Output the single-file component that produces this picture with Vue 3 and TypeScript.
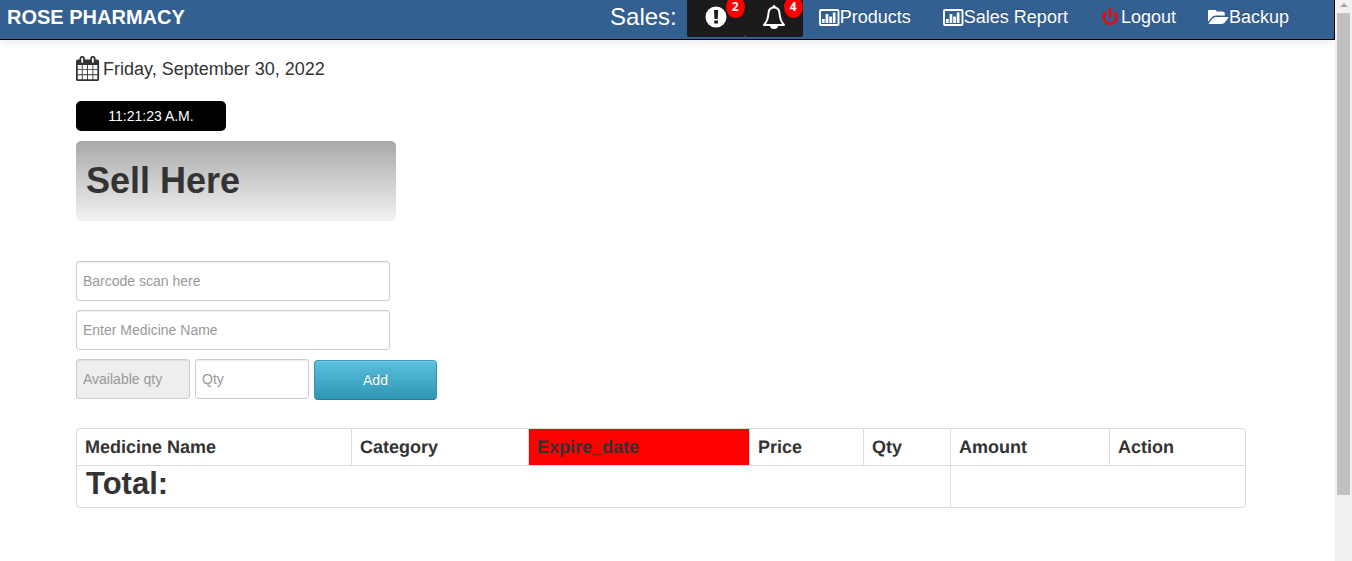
<script setup lang="ts">
import { ref } from 'vue'

interface Column {
  key: string
  label: string
}

const columns: Column[] = [
  { key: 'name', label: 'Medicine Name' },
  { key: 'category', label: 'Category' },
  { key: 'expire', label: 'Expire_date' },
  { key: 'price', label: 'Price' },
  { key: 'qty', label: 'Qty' },
  { key: 'amount', label: 'Amount' },
  { key: 'action', label: 'Action' },
]

const barcode = ref('')
const medicine = ref('')
const available = ref('')
const quantity = ref('')
</script>

<template>
  <div class="page">
    <div class="view">
      <header class="navbar">
        <a class="brand" href="#">ROSE PHARMACY</a>
        <nav class="nav">
          <span class="sales">Sales:</span>
          <a class="alert" href="#" aria-label="Expiring medicines">
            <svg width="22" height="22" viewBox="0 0 22 22">
              <circle cx="11" cy="11" r="10.5" fill="#fff" />
              <path d="M9 4h4.2l-.5 9H9.500z" fill="#1b1b1b" />
              <path d="M9.200 14.500h3.800v3H9.200z" fill="#1b1b1b" />
            </svg>
            <span class="badge">2</span>
          </a>
          <a class="alert" href="#" aria-label="Low stock">
            <svg width="24" height="26" viewBox="0 0 24 26">
              <path
                d="M12 3.500C8.500 3.500 6.800 6 6.500 9c-.3 5-1.200 8.500-4.500 12h20c-3.300-3.500-4.200-7-4.500-12-.3-3-2-5.500-5.500-5.500z"
                fill="none"
                stroke="#fff"
                stroke-width="2"
                stroke-linejoin="round"
              />
              <circle cx="12" cy="2.500" r="1.500" fill="#fff" />
              <path d="M8 21.500h8a4 3.600 0 0 1-8 0z" fill="#fff" />
            </svg>
            <span class="badge">4</span>
          </a>
          <a class="link" href="#">
            <svg class="icon" width="21" height="17" viewBox="0 0 21 17">
              <rect x="1" y="1" width="18.500" height="15" rx="1" fill="none" stroke="currentColor" stroke-width="1.900" />
              <path d="M3 10h2.700v4H3zM6.600 5h2.700v9H6.600zM10.200 7.500h2.700V14h-2.700zM13.800 3.500h2.700V14h-2.700z" fill="currentColor" />
            </svg>
            Products
          </a>
          <a class="link" href="#">
            <svg class="icon" width="21" height="17" viewBox="0 0 21 17">
              <rect x="1" y="1" width="18.500" height="15" rx="1" fill="none" stroke="currentColor" stroke-width="1.900" />
              <path d="M3 10h2.700v4H3zM6.600 5h2.700v9H6.600zM10.200 7.500h2.700V14h-2.700zM13.800 3.500h2.700V14h-2.700z" fill="currentColor" />
            </svg>
            Sales Report
          </a>
          <a class="link" href="#">
            <svg class="icon" width="21" height="18" viewBox="0 0 21 18">
              <path d="M6.200 4.200a6.500 6.500 0 1 0 7.600 0" fill="none" stroke="red" stroke-width="2.300" />
              <path d="M10 1v8" stroke="red" stroke-width="2.400" stroke-linecap="round" />
            </svg>
            Logout
          </a>
          <a class="link" href="#">
            <svg class="icon" width="21" height="14" viewBox="0 256 1920 1280">
              <path
                fill="currentColor"
                d="M1879 952q0 31-31 66l-336 396q-43 51-120.500 86.500t-143.500 35.500h-1088q-34 0-60.500-13t-26.500-43q0-31 31-66l336-396q43-51 120.500-86.500t143.500-35.500h1088q34 0 60.500 13t26.500 43zm-343-344v160h-832q-94 0-197 47.500t-164 119.500l-337 396-5 6q0-4-.5-12.500t-.5-12.500v-960q0-92 66-158t158-66h320q92 0 158 66t66 158v32h544q92 0 158 66t66 158z"
              />
            </svg>
            Backup
          </a>
        </nav>
      </header>

      <main class="content">
        <p class="date">
          <svg width="24" height="25" viewBox="64 0 1728 1792">
            <path
              fill="#333"
              d="M192 1664h288v-288h-288v288zm352 0h320v-288h-320v288zm-352-352h288v-320h-288v320zm352 0h320v-320h-320v320zm-352-384h288v-288h-288v288zm736 736h320v-288h-320v288zm-384-736h320v-288h-320v288zm768 736h288v-288h-288v288zm-384-352h320v-320h-320v320zm-352-864v-288q0-13-9.500-22.500t-22.500-9.500h-64q-13 0-22.500 9.500t-9.500 22.500v288q0 13 9.500 22.500t22.500 9.500h64q13 0 22.500-9.500t9.500-22.500zm736 864h288v-320h-288v320zm-384-384h320v-288h-320v288zm384 0h288v-288h-288v288zm32-480v-288q0-13-9.500-22.500t-22.500-9.500h-64q-13 0-22.500 9.500t-9.500 22.500v288q0 13 9.500 22.500t22.500 9.500h64q13 0 22.500-9.500t9.500-22.500zm384-64v1280q0 52-38 90t-90 38h-1408q-52 0-90-38t-38-90v-1280q0-52 38-90t90-38h128v-96q0-66 47-113t113-47h64q66 0 113 47t47 113v96h384v-96q0-66 47-113t113-47h64q66 0 113 47t47 113v96h128q52 0 90 38t38 90z"
            />
          </svg>
          Friday, September 30, 2022
        </p>

        <div class="clock">11:21:23 A.M.</div>
        <h1 class="title">Sell Here</h1>

        <form class="form" @submit.prevent>
          <input v-model="barcode" class="field" type="text" placeholder="Barcode scan here" aria-label="Barcode scan here" />
          <input v-model="medicine" class="field" type="text" placeholder="Enter Medicine Name" aria-label="Enter Medicine Name" />
          <div class="row">
            <input v-model="available" class="field small" type="text" placeholder="Available qty" aria-label="Available qty" readonly />
            <input v-model="quantity" class="field small" type="text" placeholder="Qty" aria-label="Qty" />
            <button class="add" type="submit">Add</button>
          </div>
        </form>

        <table class="table">
          <colgroup>
            <col v-for="column in columns" :key="column.key" :class="'col-' + column.key" />
          </colgroup>
          <thead>
            <tr>
              <th v-for="column in columns" :key="column.key" scope="col" :class="{ expire: column.key === 'expire' }">
                {{ column.label }}
              </th>
            </tr>
          </thead>
          <tbody>
            <tr>
              <th class="total" colspan="5" scope="row">Total:</th>
              <td colspan="2"></td>
            </tr>
          </tbody>
        </table>
      </main>
    </div>

    <div class="scrollbar" aria-hidden="true">
      <span class="arrow"></span>
      <span class="thumb"></span>
    </div>
  </div>
</template>

<style>
body {
  margin: 0;
  background: #fff;
}
</style>

<style scoped>
.page {
  display: grid;
  grid-template-columns: minmax(0, 1fr) 17px;
  min-height: 100vh;
  color: #333;
  font: 14px/20px "Liberation Sans", Arial, sans-serif;
}

.navbar {
  display: flex;
  justify-content: space-between;
  box-sizing: border-box;
  height: 40px;
  padding: 0 29px 0 7px;
  border: solid #000;
  border-width: 0 1px 1px 0;
  background: #335f91;
  box-shadow: 0 1px 10px rgba(0, 0, 0, 0.1);
}

.navbar a {
  color: #fff;
  text-decoration: none;
}

.brand {
  font-size: 20px;
  font-weight: bold;
  line-height: 34px;
}

.nav {
  display: flex;
  align-items: flex-start;
}

.sales {
  margin-right: 10px;
  color: #fff;
  font-size: 24px;
  line-height: 34px;
}

.alert {
  position: relative;
  display: flex;
  align-items: center;
  justify-content: center;
  width: 58px;
  height: 37px;
  padding-bottom: 4px;
  box-sizing: border-box;
  border-radius: 0 0 2px 2px;
  background: #1b1b1b;
}

.badge {
  position: absolute;
  top: -4px;
  right: 0;
  width: 19px;
  height: 22px;
  border-radius: 50%;
  background: red;
  font: bold 12px/22px "Open Sans", sans-serif;
  text-align: center;
}

.link {
  display: flex;
  align-items: center;
  height: 34px;
  padding: 0 16px;
  font-size: 18px;
  text-shadow: 0 -1px 0 rgba(0, 0, 0, 0.25);
}

.icon {
  flex: none;
}

.content {
  padding: 16px 89px 53px 76px;
}

.date {
  display: flex;
  align-items: center;
  gap: 3px;
  height: 25px;
  margin: 0 0 20px;
  font-size: 18px;
}

.clock {
  width: 150px;
  margin-bottom: 10px;
  border-radius: 5px;
  background: #000;
  color: #fff;
  line-height: 30px;
  text-align: center;
}

.title {
  box-sizing: border-box;
  width: 320px;
  margin: 0 0 40px;
  padding: 0 10px;
  border-radius: 5px;
  background: linear-gradient(#a9a9a9, #f2f2f2);
  font-size: 36px;
  line-height: 80px;
}

.form {
  display: flex;
  flex-direction: column;
  align-items: flex-start;
  gap: 9px;
  margin-bottom: 28px;
}

.row {
  display: flex;
  align-items: flex-start;
  gap: 5px;
}

.field {
  box-sizing: border-box;
  width: 314px;
  height: 40px;
  margin: 0;
  padding: 4px 6px;
  border: 1px solid #ccc;
  border-radius: 3px;
  background: #fff;
  box-shadow: inset 0 1px 1px rgba(0, 0, 0, 0.075);
  color: #555;
  font: inherit;
}

.field::placeholder {
  color: #999;
}

.small {
  width: 114px;
}

.field:read-only {
  background: #eee;
}

.add {
  width: 123px;
  height: 40px;
  margin: 1px 0 0;
  border: 1px solid;
  border-color: #3a9ab8 #2f96b4 #23809a;
  border-radius: 4px;
  background: linear-gradient(#5bc0de, #2f96b4);
  box-shadow: inset 0 1px 0 rgba(255, 255, 255, 0.2);
  color: #fff;
  font: inherit;
  text-shadow: 0 -1px 0 rgba(0, 0, 0, 0.25);
}

.table {
  width: 100%;
  table-layout: fixed;
  border: 1px solid #ddd;
  border-left: 0;
  border-radius: 4px;
  border-spacing: 0;
}

.col-name { width: 275px; }
.col-category { width: 177px; }
.col-expire { width: 221px; }
.col-price { width: 114px; }
.col-qty { width: 87px; }
.col-amount { width: 159px; }

.table th,
.table td {
  padding: 8px;
  border-left: 1px solid #ddd;
  text-align: left;
}

.table thead th {
  font-size: 18px;
  line-height: 20px;
  text-rendering: geometricPrecision;
}

.table thead th:first-child {
  border-top-left-radius: 4px;
}

.table .expire {
  background: red;
}

.table tbody th,
.table tbody td {
  border-top: 1px solid #ddd;
}

.table tbody th {
  border-bottom-left-radius: 4px;
}

.table .total {
  padding: 0 9px 5px;
  font-size: 31px;
  line-height: 36px;
}

.scrollbar {
  display: flex;
  flex-direction: column;
  align-items: center;
  background: #f1f1f1;
}

.arrow {
  margin: 3px 0 6px;
  border: solid transparent;
  border-width: 0 4px 4px;
  border-bottom-color: #a3a3a3;
}

.thumb {
  width: 13px;
  height: 86%;
  background: #c1c1c1;
}
</style>
